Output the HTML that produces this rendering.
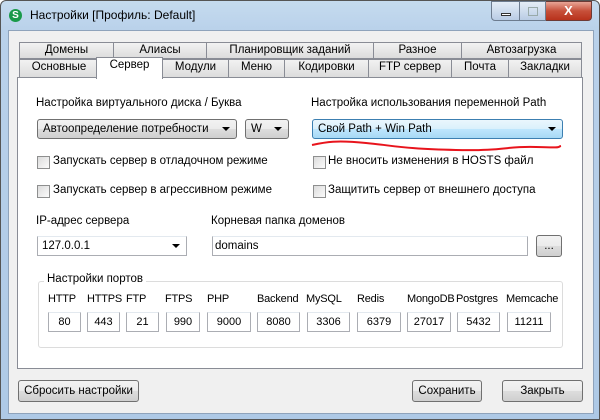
<!DOCTYPE html><html><head><meta charset="utf-8"><style>
*{box-sizing:border-box;margin:0;padding:0}
body{width:600px;height:420px;overflow:hidden;font-family:"Liberation Sans",sans-serif;font-size:11px;color:#000;background:#fff}
.a{position:absolute}
.win{position:absolute;left:0;top:0;width:600px;height:420px;background:linear-gradient(180deg,#c5dbef 0,#b9d1ea 30px,#aec9e6 100%);border:1px solid #555;border-radius:6px 6px 0 0}
.client{position:absolute;left:7px;top:29px;width:586px;height:384px;background:#f0f0f0;border:1px solid #8fa3bb}
.tab{position:absolute;height:17px;border:1px solid #898c95;background:linear-gradient(#f2f2f2,#dcdcdc);text-align:center;line-height:15px;font-size:11.5px}
.panel{position:absolute;left:16px;top:76px;width:566px;height:292px;background:#fff;border:1px solid #898c95}
.combo{position:absolute;height:20px;border:1px solid #707070;border-radius:3px;background:linear-gradient(#f2f2f2 0,#ebebeb 50%,#dddddd 51%,#cfcfcf 100%);padding-left:5px;line-height:18px;font-size:11.5px}
.arr{position:absolute;right:6px;top:7px;width:0;height:0;border-left:4px solid transparent;border-right:4px solid transparent;border-top:4px solid #000}
.cb{position:absolute;width:13px;height:13px;border:1px solid #8e8f8f;background:linear-gradient(135deg,#dcdcdc,#fbfbfb)}
.inp{position:absolute;height:20px;border:1px solid #abadb3;border-top-color:#e3e9ef;background:#fff;line-height:18px;text-align:center}
.btn{position:absolute;height:22px;border:1px solid #707070;border-radius:3px;background:linear-gradient(#f2f2f2 0,#ebebeb 50%,#dddddd 51%,#cfcfcf 100%);text-align:center;line-height:20px;font-size:11.5px}
.t{position:absolute;font-size:11.5px}
.p{position:absolute;top:292px;font-size:11px;letter-spacing:-0.2px}
</style></head><body>
<div class="win">
<div class="a" style="left:8px;top:8px;width:13px;height:13px;border-radius:50%;background:#1a9a4a;color:#fff;font-weight:bold;font-size:10px;text-align:center;line-height:13px">S</div>
<div class="a" style="left:29px;top:7px;font-size:12px">Настройки [Профиль: Default]</div>
<div class="a" style="left:490px;top:0;width:29px;height:20px;border:1px solid #6d7c8f;border-radius:0 0 0 4px;background:linear-gradient(#e4edf7,#b9cce4)"><div class="a" style="left:9px;top:11px;width:10px;height:3px;background:#fff;border:1px solid #333"></div></div>
<div class="a" style="left:519px;top:0;width:26px;height:20px;border:1px solid #6d7c8f;border-left:none;background:linear-gradient(#e4edf7,#b9cce4)"><div class="a" style="left:8px;top:5px;width:10px;height:9px;border:1px solid #9aa;"></div></div>
<div class="a" style="left:545px;top:0;width:46px;height:20px;border:1px solid #6d3a35;border-left:none;border-radius:0 0 4px 0;background:linear-gradient(#e8a596,#c7503a 50%,#b8321c);color:#fff;font-weight:bold;text-align:center;line-height:18px;font-size:13px">X</div>
<div class="client">
<div class="tab" style="left:10px;top:11px;width:95px">Домены</div>
<div class="tab" style="left:104px;top:11px;width:94px">Алиасы</div>
<div class="tab" style="left:197px;top:11px;width:168px">Планировщик заданий</div>
<div class="tab" style="left:364px;top:11px;width:89px">Разное</div>
<div class="tab" style="left:452px;top:11px;width:121px">Автозагрузка</div>
<div class="tab" style="left:10px;top:28px;width:80px;height:19px">Основные</div>
<div class="tab" style="left:153px;top:28px;width:67px;height:19px">Модули</div>
<div class="tab" style="left:219px;top:28px;width:57px;height:19px">Меню</div>
<div class="tab" style="left:275px;top:28px;width:85px;height:19px">Кодировки</div>
<div class="tab" style="left:359px;top:28px;width:84px;height:19px">FTP сервер</div>
<div class="tab" style="left:442px;top:28px;width:58px;height:19px">Почта</div>
<div class="tab" style="left:499px;top:28px;width:74px;height:19px">Закладки</div>
</div>
<div class="panel"></div>
<div class="a" style="left:95px;top:56px;width:67px;height:22px;background:#fff;border:1px solid #898c95;border-bottom:none;text-align:center;line-height:15px;font-size:11.5px">Сервер</div>

<div class="t" style="left:35px;top:96px">Настройка виртуального диска / Буква</div>
<div class="t" style="left:310px;top:96px">Настройка использования переменной Path</div>
<div class="combo" style="left:36px;top:118px;width:200px">Автоопределение потребности<div class="arr"></div></div>
<div class="combo" style="left:244px;top:118px;width:44px">W<div class="arr"></div></div>
<div class="combo" style="left:311px;top:118px;width:251px;border-color:#3c7fb1;background:linear-gradient(#eaf6fd 0,#d9f0fc 50%,#bee6fd 51%,#a7d9f5 100%)">Свой Path + Win Path<div class="arr"></div></div>
<svg class="a" style="left:305px;top:138px" width="262" height="14"><path d="M6 6 C20 3,30 1,60 4 S100 10,150 11 S200 7,230 8 S250 8,255 7" stroke="#e8141c" stroke-width="2" fill="none"/></svg>
<div class="cb" style="left:36px;top:155px"></div><div class="t" style="left:52px;top:154px">Запускать сервер в отладочном режиме</div>
<div class="cb" style="left:312px;top:155px"></div><div class="t" style="left:327px;top:154px">Не вносить изменения в HOSTS файл</div>
<div class="cb" style="left:36px;top:184px"></div><div class="t" style="left:52px;top:183px">Запускать сервер в агрессивном режиме</div>
<div class="cb" style="left:312px;top:184px"></div><div class="t" style="left:327px;top:183px">Защитить сервер от внешнего доступа</div>
<div class="t" style="left:35px;top:214px">IP-адрес сервера</div>
<div class="t" style="left:210px;top:214px">Корневая папка доменов</div>
<div class="inp" style="left:36px;top:235px;width:150px;text-align:left;padding-left:4px;font-size:11.5px">127.0.0.1<div class="arr" style="top:7px"></div></div>
<div class="inp" style="left:211px;top:235px;width:316px;text-align:left;padding-left:2px;font-size:11.5px">domains</div>
<div class="btn" style="left:535px;top:234px;width:26px">...</div>

<div class="a" style="left:37px;top:280px;width:525px;height:67px;border:1px solid #dcdcdc;border-radius:3px"></div>
<div class="t" style="left:43px;top:272px;background:#fff;padding:0 3px">Настройки портов</div>
<div class="p" style="left:47px">HTTP</div><div class="inp" style="left:47px;top:311px;width:33px">80</div>
<div class="p" style="left:86px">HTTPS</div><div class="inp" style="left:86px;top:311px;width:33px">443</div>
<div class="p" style="left:125px">FTP</div><div class="inp" style="left:125px;top:311px;width:33px">21</div>
<div class="p" style="left:164px">FTPS</div><div class="inp" style="left:165px;top:311px;width:34px">990</div>
<div class="p" style="left:206px">PHP</div><div class="inp" style="left:206px;top:311px;width:44px">9000</div>
<div class="p" style="left:256px">Backend</div><div class="inp" style="left:256px;top:311px;width:43px">8080</div>
<div class="p" style="left:305px">MySQL</div><div class="inp" style="left:306px;top:311px;width:43px">3306</div>
<div class="p" style="left:356px">Redis</div><div class="inp" style="left:356px;top:311px;width:44px">6379</div>
<div class="p" style="left:406px">MongoDB</div><div class="inp" style="left:406px;top:311px;width:44px">27017</div>
<div class="p" style="left:455px">Postgres</div><div class="inp" style="left:456px;top:311px;width:43px">5432</div>
<div class="p" style="left:505px">Memcache</div><div class="inp" style="left:506px;top:311px;width:44px">11211</div>

<div class="btn" style="left:17px;top:379px;width:121px">Сбросить настройки</div>
<div class="btn" style="left:411px;top:379px;width:70px">Сохранить</div>
<div class="btn" style="left:501px;top:379px;width:81px">Закрыть</div>
</div>
</body></html>
